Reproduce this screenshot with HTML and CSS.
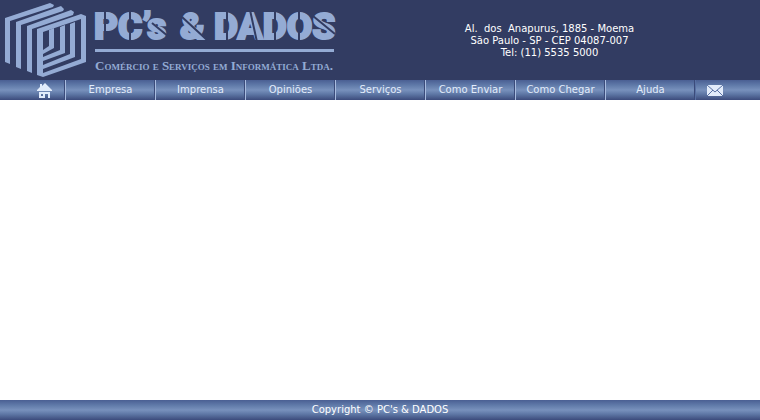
FILE: index.html
```
<!DOCTYPE html>
<html lang="pt-BR">
<head>
<meta charset="utf-8">
<title>PC's &amp; DADOS</title>
<link rel="stylesheet" href="styles.css">
</head>
<body>
<header class="header">
  <svg class="logo" width="339" height="80" viewBox="0 0 339 80" role="img">
    <g class="logo-shape">
      <path d="M5 18L50 3L54 5L53 7L10 21V64L5 62z"/>
      <path d="M16 22L61 6L64 9L63 11L21 25V69L16 67z"/>
      <path d="M27 26L71 10L74 12L73 15L32 29V73L27 71z"/>
      <path fill-rule="evenodd" d="M37 29L81 14L86 16V62L43 77L37 75zM43 32V73L81 59V19z"/>
      <path d="M70 24L75 22V57L43 69V65L70 54z"/>
      <path d="M60 27L65 25V53L43 61V57L60 50z"/>
      <path d="M49 30L54 28V48L43 54V50L49 46z"/>
    </g>
    <g class="logo-name">
      <text x="94" y="39">PC’s</text>
      <text x="180" y="39">&amp;</text>
      <text x="214" y="39">DADOS</text>
    </g>
    <g class="logo-cut">
      <path d="M105 10V42M130 10V42M152 23L169 37M182 17L207 40M227 10V42M250 10L257 42M275 10V42M299 10V42M313 16L335 34"/>
    </g>
    <path class="logo-rule" d="M95 50.500H334"/>
    <text class="logo-tagline" x="95" y="70">Comércio e Serviços em Informática Ltda.</text>
  </svg>
  <address class="address">Al.&nbsp; dos&nbsp; Anapurus, 1885 - Moema<br>São Paulo - SP - CEP 04087-007<br>Tel: (11) 5535 5000</address>
</header>
<nav class="nav">
  <a class="nav-link nav-home" href="#" aria-label="Home">
    <svg width="15" height="16" viewBox="0 0 15 16"><path class="icon-fill" d="M0 9V8L3 5V2h2v2l3-3 7 7v1zM2 10h11v6H2zM4 12v2h2v-2zM8 12v4h3v-4z" fill-rule="evenodd"/></svg>
  </a>
  <a class="nav-link" href="#">Empresa</a>
  <a class="nav-link" href="#">Imprensa</a>
  <a class="nav-link" href="#">Opiniões</a>
  <a class="nav-link" href="#">Serviços</a>
  <a class="nav-link" href="#">Como Enviar</a>
  <a class="nav-link" href="#">Como Chegar</a>
  <a class="nav-link" href="#">Ajuda</a>
  <a class="nav-link nav-mail" href="#" aria-label="E-mail">
    <svg width="16" height="11" viewBox="0 0 16 11"><path class="icon-fill" d="M0 0h16v11H0z"/><path class="icon-line" d="M0 0L8 7L16 0M0 11L6 5M16 11L10 5"/></svg>
  </a>
</nav>
<main class="content"></main>
<footer class="footer">Copyright © PC's &amp; DADOS</footer>
</body>
</html>
```
FILE: styles.css
```
* {
  box-sizing: border-box;
}

body {
  display: flex;
  flex-direction: column;
  min-height: 100vh;
  margin: 0;
  background: #fff;
  color: #fff;
  font-family: Verdana, "DejaVu Sans", sans-serif;
  font-size: 10px;
  line-height: 12px;
}

.header {
  display: flex;
  align-items: center;
  background: #323c62;
}

.logo {
  flex: none;
}

.logo-shape {
  fill: #94abd4;
}

.logo-name {
  fill: #94abd4;
  stroke: #94abd4;
  stroke-width: 2;
  font-family: Roboto, sans-serif;
  font-size: 37px;
  font-weight: 900;
}

.logo-cut {
  fill: none;
  stroke: #323c62;
  stroke-width: 2;
}

.logo-rule {
  stroke: #94abd4;
  stroke-width: 3;
}

.logo-tagline {
  fill: #94abd4;
  font-family: "Liberation Serif", serif;
  font-size: 13px;
  font-weight: bold;
  font-variant: small-caps;
}

.address {
  flex: 1;
  padding-top: 2px;
  font-style: normal;
  text-align: center;
}

.nav,
.footer {
  background: linear-gradient(#4a5f93, #5f79a8 25%, #7891bc 50%, #5f78a6 70%, #3c4b7c);
}

.nav {
  display: grid;
  grid-template-columns: 65fr repeat(7, 90fr) 65fr;
}

.nav-link {
  display: flex;
  align-items: center;
  justify-content: center;
  height: 20px;
  border-left: 1px solid #a9bcdf;
  box-shadow: -1px 0 #3b4b7a;
  color: #e2ecfb;
  text-decoration: none;
}

.nav-home {
  justify-content: flex-end;
  padding-right: 13px;
  border-left: 0;
}

.nav-mail {
  justify-content: flex-start;
  padding-left: 11px;
  border-left-color: #5870a3;
}

.icon-fill {
  fill: #e2ecfb;
}

.icon-line {
  fill: none;
  stroke: #5870a3;
}

.content {
  flex: 1;
}

.footer {
  padding: 4px;
  text-align: center;
}
```
